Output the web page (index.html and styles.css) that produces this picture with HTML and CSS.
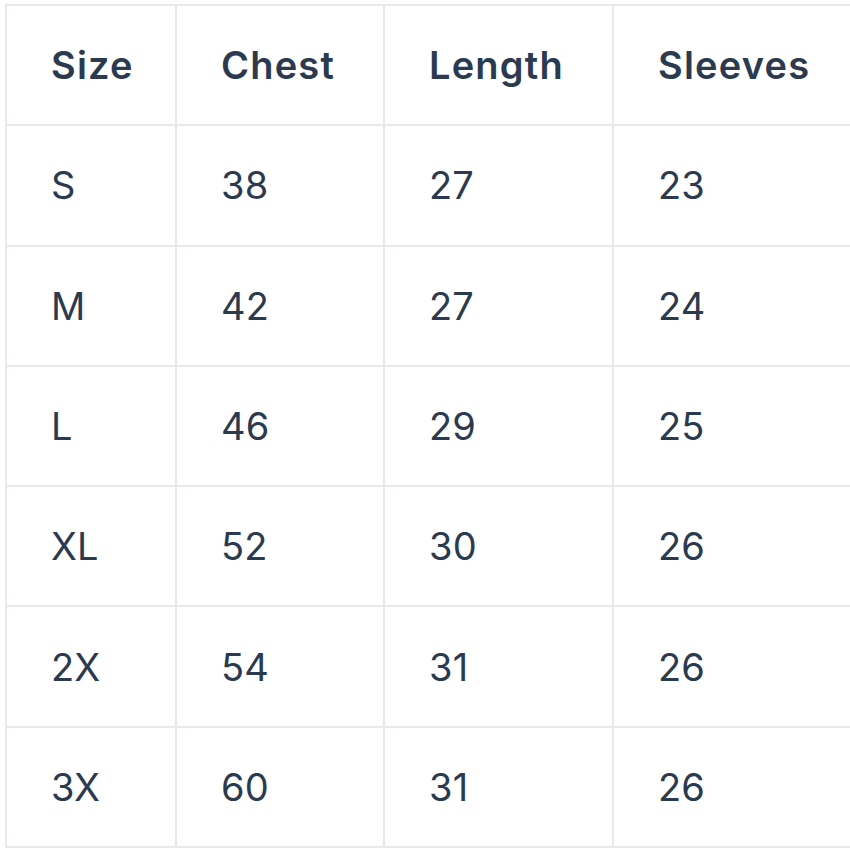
FILE: index.html
```html
<!DOCTYPE html>
<html lang="en">
<head>
<meta charset="utf-8">
<title>Size chart</title>
<link rel="stylesheet" href="styles.css">
</head>
<body>
<div class="chart">
  <div class="cell head">Size</div><div class="cell head">Chest</div><div class="cell head">Length</div><div class="cell head">Sleeves</div>
  <div class="cell">S</div><div class="cell">38</div><div class="cell">27</div><div class="cell">23</div>
  <div class="cell">M</div><div class="cell">42</div><div class="cell">27</div><div class="cell">24</div>
  <div class="cell">L</div><div class="cell">46</div><div class="cell">29</div><div class="cell">25</div>
  <div class="cell">XL</div><div class="cell">52</div><div class="cell">30</div><div class="cell">26</div>
  <div class="cell">2X</div><div class="cell">54</div><div class="cell">31</div><div class="cell">26</div>
  <div class="cell">3X</div><div class="cell">60</div><div class="cell">31</div><div class="cell">26</div>
</div>
</body>
</html>
```
FILE: styles.css
```css
html, body {
  margin: 0;
  padding: 0;
  background: #ffffff;
  overflow: hidden;
}
body {
  padding: 4px 0 0 5px;
  font-family: Inter, "Noto Sans", "Liberation Sans", sans-serif;
  color: #2b3a4f;
}
.chart {
  display: grid;
  grid-template-columns: 168px 206px 227px 240px;
  grid-auto-rows: 118.3px;
  gap: 2px;
  padding: 2px;
  background: #ece8e8;
  width: max-content;
}
.cell {
  background: #ffffff;
  display: flex;
  align-items: center;
  padding: 0 44px;
  font-size: 38px;
  font-weight: 400;
  letter-spacing: 0.2px;
}
.head {
  font-weight: 600;
  letter-spacing: 1.2px;
}
```
